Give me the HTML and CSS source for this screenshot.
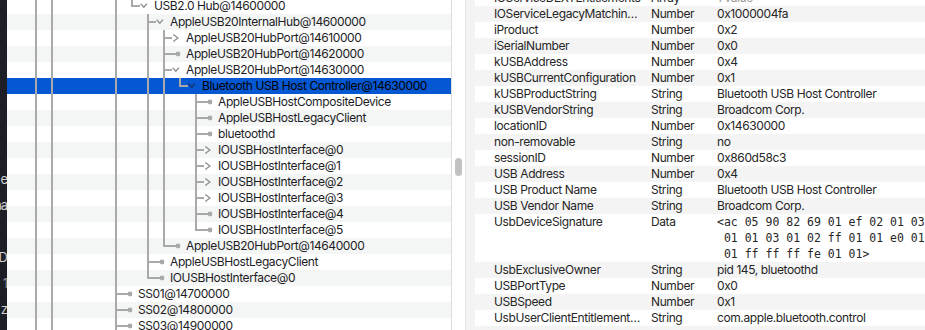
FILE: index.html
```html
<!DOCTYPE html>
<html lang="en">
<head>
    <meta charset="UTF-8">
    <title>IORegistryExplorer - Bluetooth USB Host Controller</title>
    <link rel="stylesheet" href="styles.css">
</head>
<body>
    <svg class="defs" aria-hidden="true">
        <symbol id="dn" viewBox="0 0 14 16">
            <polyline points="0.6,5.6 3.8,9.2 7,5.6" fill="none" stroke="currentColor" stroke-width="1.3"/>
        </symbol>
        <symbol id="rt" viewBox="0 0 14 16">
            <polyline points="1.3,4.6 5.9,8 1.3,11.4" fill="none" stroke="currentColor" stroke-width="1.3"/>
        </symbol>
        <symbol id="dot" viewBox="0 0 14 16">
            <rect x="0" y="7" width="5" height="2" fill="#a9a9a9"/>
            <circle cx="6" cy="8" r="2.4" fill="#a9a9a9"/>
        </symbol>
    </svg>

    <div class="window">
        <!-- bit of the window behind -->
        <div class="backdrop">
            <div class="peek">e</div>
            <div class="peek">aa</div>
            <div class="peek"></div>
            <div class="peek">D</div>
            <div class="peek dim">1</div>
            <div class="peek">z</div>
        </div>

        <!-- registry tree -->
        <div class="tree">
            <div class="row"><span class="g p"></span><span class="g p"></span><span class="gap3"></span><span class="g p"></span><span class="g e"></span><svg class="ic"><use href="#dn"/></svg><span class="label">USB2.0 Hub@14600000</span></div>
            <div class="row alt"><span class="g p"></span><span class="g p"></span><span class="gap3"></span><span class="g p"></span><span class="g"></span><span class="g t"></span><svg class="ic"><use href="#dn"/></svg><span class="label">AppleUSB20InternalHub@14600000</span></div>
            <div class="row"><span class="g p"></span><span class="g p"></span><span class="gap3"></span><span class="g p"></span><span class="g"></span><span class="g p"></span><span class="g t"></span><svg class="ic"><use href="#rt"/></svg><span class="label">AppleUSB20HubPort@14610000</span></div>
            <div class="row alt"><span class="g p"></span><span class="g p"></span><span class="gap3"></span><span class="g p"></span><span class="g"></span><span class="g p"></span><span class="g t"></span><svg class="ic"><use href="#dot"/></svg><span class="label">AppleUSB20HubPort@14620000</span></div>
            <div class="row"><span class="g p"></span><span class="g p"></span><span class="gap3"></span><span class="g p"></span><span class="g"></span><span class="g p"></span><span class="g t"></span><svg class="ic"><use href="#dn"/></svg><span class="label">AppleUSB20HubPort@14630000</span></div>
            <div class="row selected"><span class="g p"></span><span class="g p"></span><span class="gap3"></span><span class="g p"></span><span class="g"></span><span class="g p"></span><span class="g p"></span><span class="g e"></span><svg class="ic"><use href="#dn"/></svg><span class="label">Bluetooth USB Host Controller@14630000</span></div>
            <div class="row"><span class="g p"></span><span class="g p"></span><span class="gap3"></span><span class="g p"></span><span class="g"></span><span class="g p"></span><span class="g p"></span><span class="g"></span><span class="g t"></span><svg class="ic"><use href="#dot"/></svg><span class="label">AppleUSBHostCompositeDevice</span></div>
            <div class="row alt"><span class="g p"></span><span class="g p"></span><span class="gap3"></span><span class="g p"></span><span class="g"></span><span class="g p"></span><span class="g p"></span><span class="g"></span><span class="g t"></span><svg class="ic"><use href="#dot"/></svg><span class="label">AppleUSBHostLegacyClient</span></div>
            <div class="row"><span class="g p"></span><span class="g p"></span><span class="gap3"></span><span class="g p"></span><span class="g"></span><span class="g p"></span><span class="g p"></span><span class="g"></span><span class="g t"></span><svg class="ic"><use href="#dot"/></svg><span class="label">bluetoothd</span></div>
            <div class="row alt"><span class="g p"></span><span class="g p"></span><span class="gap3"></span><span class="g p"></span><span class="g"></span><span class="g p"></span><span class="g p"></span><span class="g"></span><span class="g t"></span><svg class="ic"><use href="#rt"/></svg><span class="label">IOUSBHostInterface@0</span></div>
            <div class="row"><span class="g p"></span><span class="g p"></span><span class="gap3"></span><span class="g p"></span><span class="g"></span><span class="g p"></span><span class="g p"></span><span class="g"></span><span class="g t"></span><svg class="ic"><use href="#rt"/></svg><span class="label">IOUSBHostInterface@1</span></div>
            <div class="row alt"><span class="g p"></span><span class="g p"></span><span class="gap3"></span><span class="g p"></span><span class="g"></span><span class="g p"></span><span class="g p"></span><span class="g"></span><span class="g t"></span><svg class="ic"><use href="#rt"/></svg><span class="label">IOUSBHostInterface@2</span></div>
            <div class="row"><span class="g p"></span><span class="g p"></span><span class="gap3"></span><span class="g p"></span><span class="g"></span><span class="g p"></span><span class="g p"></span><span class="g"></span><span class="g t"></span><svg class="ic"><use href="#rt"/></svg><span class="label">IOUSBHostInterface@3</span></div>
            <div class="row alt"><span class="g p"></span><span class="g p"></span><span class="gap3"></span><span class="g p"></span><span class="g"></span><span class="g p"></span><span class="g p"></span><span class="g"></span><span class="g t"></span><svg class="ic"><use href="#dot"/></svg><span class="label">IOUSBHostInterface@4</span></div>
            <div class="row"><span class="g p"></span><span class="g p"></span><span class="gap3"></span><span class="g p"></span><span class="g"></span><span class="g p"></span><span class="g p"></span><span class="g"></span><span class="g e"></span><svg class="ic"><use href="#dot"/></svg><span class="label">IOUSBHostInterface@5</span></div>
            <div class="row alt"><span class="g p"></span><span class="g p"></span><span class="gap3"></span><span class="g p"></span><span class="g"></span><span class="g p"></span><span class="g e"></span><svg class="ic"><use href="#dot"/></svg><span class="label">AppleUSB20HubPort@14640000</span></div>
            <div class="row"><span class="g p"></span><span class="g p"></span><span class="gap3"></span><span class="g p"></span><span class="g"></span><span class="g t"></span><svg class="ic"><use href="#dot"/></svg><span class="label">AppleUSBHostLegacyClient</span></div>
            <div class="row alt"><span class="g p"></span><span class="g p"></span><span class="gap3"></span><span class="g p"></span><span class="g"></span><span class="g e"></span><svg class="ic"><use href="#dot"/></svg><span class="label">IOUSBHostInterface@0</span></div>
            <div class="row"><span class="g p"></span><span class="g p"></span><span class="gap3"></span><span class="g t"></span><svg class="ic"><use href="#dot"/></svg><span class="label">SS01@14700000</span></div>
            <div class="row alt"><span class="g p"></span><span class="g p"></span><span class="gap3"></span><span class="g t"></span><svg class="ic"><use href="#dot"/></svg><span class="label">SS02@14800000</span></div>
            <div class="row"><span class="g p"></span><span class="g p"></span><span class="gap3"></span><span class="g t"></span><svg class="ic"><use href="#dot"/></svg><span class="label">SS03@14900000</span></div>
        </div>

        <div class="divider"></div>
        <div class="scroller"><div class="thumb"></div></div>
        <div class="gutter"></div>

        <!-- properties of the selected entry -->
        <div class="props">
            <div class="prop"><span class="disc"><svg class="ic"><use href="#dn"/></svg></span><span class="key">IOServiceDEXTEntitlements</span><span class="type">Array</span><span class="val muted">1 value</span></div>
            <div class="prop alt"><span class="disc"></span><span class="key">IOServiceLegacyMatchingRegistryID</span><span class="type">Number</span><span class="val">0x1000004fa</span></div>
            <div class="prop"><span class="disc"></span><span class="key">iProduct</span><span class="type">Number</span><span class="val">0x2</span></div>
            <div class="prop alt"><span class="disc"></span><span class="key">iSerialNumber</span><span class="type">Number</span><span class="val">0x0</span></div>
            <div class="prop"><span class="disc"></span><span class="key">kUSBAddress</span><span class="type">Number</span><span class="val">0x4</span></div>
            <div class="prop alt"><span class="disc"></span><span class="key">kUSBCurrentConfiguration</span><span class="type">Number</span><span class="val">0x1</span></div>
            <div class="prop"><span class="disc"></span><span class="key">kUSBProductString</span><span class="type">String</span><span class="val">Bluetooth USB Host Controller</span></div>
            <div class="prop alt"><span class="disc"></span><span class="key">kUSBVendorString</span><span class="type">String</span><span class="val">Broadcom Corp.</span></div>
            <div class="prop"><span class="disc"></span><span class="key">locationID</span><span class="type">Number</span><span class="val">0x14630000</span></div>
            <div class="prop alt"><span class="disc"></span><span class="key">non-removable</span><span class="type">String</span><span class="val">no</span></div>
            <div class="prop"><span class="disc"></span><span class="key">sessionID</span><span class="type">Number</span><span class="val">0x860d58c3</span></div>
            <div class="prop alt"><span class="disc"></span><span class="key">USB Address</span><span class="type">Number</span><span class="val">0x4</span></div>
            <div class="prop"><span class="disc"></span><span class="key">USB Product Name</span><span class="type">String</span><span class="val">Bluetooth USB Host Controller</span></div>
            <div class="prop alt"><span class="disc"></span><span class="key">USB Vendor Name</span><span class="type">String</span><span class="val">Broadcom Corp.</span></div>
            <div class="prop tall"><span class="disc"></span><span class="key">UsbDeviceSignature</span><span class="type">Data</span><span class="val data">&lt;ac 05 90 82 69 01 ef 02 01 03
 01 01 03 01 02 ff 01 01 e0 01
 01 ff ff ff fe 01 01&gt;</span></div>
            <div class="prop alt"><span class="disc"></span><span class="key">UsbExclusiveOwner</span><span class="type">String</span><span class="val">pid 145, bluetoothd</span></div>
            <div class="prop"><span class="disc"></span><span class="key">USBPortType</span><span class="type">Number</span><span class="val">0x0</span></div>
            <div class="prop alt"><span class="disc"></span><span class="key">USBSpeed</span><span class="type">Number</span><span class="val">0x1</span></div>
            <div class="prop"><span class="disc"></span><span class="key">UsbUserClientEntitlementRequired</span><span class="type">String</span><span class="val">com.apple.bluetooth.control</span></div>
            <div class="prop alt"><span class="disc"></span><span class="key"></span><span class="type"></span><span class="val"></span></div>
        </div>
    </div>
</body>
</html>
```

FILE: styles.css
```css
* {
    margin: 0;
    padding: 0;
    box-sizing: border-box;
}

body {
    width: 925px;
    height: 330px;
    overflow: hidden;
    background: #fff;
    font-family: 'Inter', 'Helvetica Neue', sans-serif;
    font-size: 12px;
    letter-spacing: -0.4px;
    color: #1d1d1f;
}

.defs {
    display: block;
    width: 0;
    height: 0;
    overflow: hidden;
}

.window {
    display: flex;
    height: 330px;
    overflow: hidden;
}

/* dark window peeking in from the left */
.backdrop {
    width: 7px;
    flex: none;
    background: #1e1e26;
    overflow: hidden;
    padding-top: 166px;
}

.peek {
    height: 26px;
    line-height: 26px;
    font-size: 13px;
    letter-spacing: -1px;
    color: #cfcfd2;
    white-space: nowrap;
    direction: rtl;
}

.peek.dim {
    color: #8d8d92;
}

/* tree */
.tree {
    width: 444px;
    flex: none;
    margin-top: -2px;
}

.row {
    display: flex;
    align-items: center;
    height: 16px;
    padding-left: 21px;
    white-space: nowrap;
}

.row.alt {
    background: #f4f5f5;
}

.row.selected {
    background: #0558d2;
    color: #000;
}

.g {
    width: 16px;
    height: 16px;
    flex: none;
}

.gap3 {
    width: 48px;
    height: 16px;
    flex: none;
}

/* pass-through line */
.g.p {
    background: linear-gradient(#a9a9a9, #a9a9a9) 7px 0 / 2px 16px no-repeat;
}

/* tee: line continues and branches right */
.g.t {
    background:
        linear-gradient(#a9a9a9, #a9a9a9) 7px 0 / 2px 16px no-repeat,
        linear-gradient(#a9a9a9, #a9a9a9) 7px 7px / 9px 2px no-repeat;
}

/* elbow: last child */
.g.e {
    background:
        linear-gradient(#a9a9a9, #a9a9a9) 7px 0 / 2px 9px no-repeat,
        linear-gradient(#a9a9a9, #a9a9a9) 7px 7px / 9px 2px no-repeat;
}

.ic {
    width: 14px;
    height: 16px;
    flex: none;
    color: #8c8c8c;
}

.selected .ic {
    color: #1c2f66;
}

.label {
    line-height: 16px;
}

/* split between panes */
.divider {
    width: 1px;
    flex: none;
    background: #dcdcdc;
}

.scroller {
    width: 13px;
    flex: none;
    background: #fff;
    padding-top: 158px;
    padding-left: 3px;
}

.thumb {
    width: 7px;
    height: 18px;
    border-radius: 4px;
    background: #c2c2c2;
}

.gutter {
    width: 10px;
    flex: none;
    background: #f3f3f3;
    border-left: 1px solid #e4e4e4;
}

/* property table */
.props {
    flex: 1;
    margin-top: -10px;
    color: #262626;
}

.prop {
    display: flex;
    height: 16px;
    line-height: 16px;
    white-space: nowrap;
}

.prop.alt {
    background: #f4f4f4;
}

.prop.tall {
    height: 48px;
}

.disc {
    width: 19px;
    flex: none;
    display: flex;
    align-items: flex-start;
    padding-left: 9px;
}

.key {
    width: 157px;
    flex: none;
    padding-right: 10px;
    overflow: hidden;
    text-overflow: ellipsis;
}

.type {
    width: 66px;
    flex: none;
}

.val {
    flex: 1;
    overflow: hidden;
}

.val.muted {
    color: #9a9a9a;
}

.val.data {
    font-family: 'DejaVu Sans Mono', monospace;
    font-size: 11.5px;
    letter-spacing: 0;
    white-space: pre;
}
```
